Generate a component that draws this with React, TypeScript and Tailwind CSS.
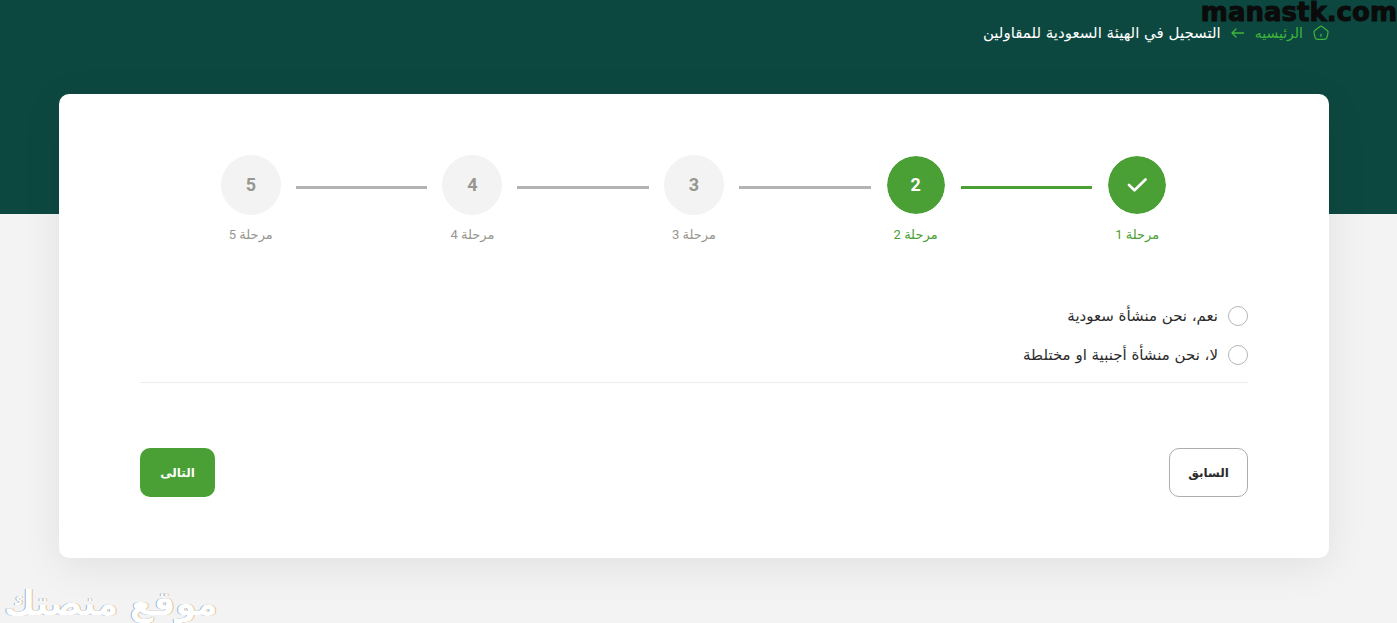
import { clsx } from 'clsx';

type StepState = 'done' | 'current' | 'upcoming';

const steps: { number: number; state: StepState }[] = [
    { number: 1, state: 'done' },
    { number: 2, state: 'current' },
    { number: 3, state: 'upcoming' },
    { number: 4, state: 'upcoming' },
    { number: 5, state: 'upcoming' },
];

const options = [
    { value: 'saudi', label: 'نعم، نحن منشأة سعودية' },
    { value: 'foreign', label: 'لا، نحن منشأة أجنبية او مختلطة' },
];

function HomeIcon() {
    return (
        <svg viewBox="0 0 16 16" className="size-4" fill="none" stroke="currentColor" strokeWidth="1.2" strokeLinecap="round" strokeLinejoin="round">
            <path d="M7 1.500 1.800 5.400c-.8.6-1 1.400-.8 2.300l1 4.700c.3 1.200 1.200 1.900 2.400 1.900h7.200c1.200 0 2.100-.7 2.400-1.900l1-4.700c.2-.9 0-1.700-.8-2.300L9 1.500c-.6-.4-1.400-.4-2 0Z" />
            <path d="M8 11.300v-2" />
        </svg>
    );
}

function ArrowIcon() {
    return (
        <svg viewBox="0 0 14 12" className="h-3 w-[14px]" fill="none" stroke="currentColor" strokeWidth="1.3" strokeLinecap="round" strokeLinejoin="round">
            <path d="M12.500 6H1M5 2 1 6l4 4" />
        </svg>
    );
}

function CheckIcon() {
    return (
        <svg viewBox="0 0 20 14" className="h-[14px] w-5" fill="none" stroke="currentColor" strokeWidth="2.6" strokeLinecap="round" strokeLinejoin="round">
            <path d="m2 7 5.500 5.300L18.500 1.500" />
        </svg>
    );
}

function Connector({ active, hidden }: { active: boolean; hidden: boolean }) {
    return <span className={clsx('mt-1 h-[3px] flex-1', hidden ? 'bg-transparent' : active ? 'bg-[#4aa034]' : 'bg-[#b3b3b3]')} />;
}

function Step({ number, state }: { number: number; state: StepState }) {
    const reached = state !== 'upcoming';

    return (
        <li className="font-[Roboto,'DejaVu_Sans',sans-serif]">
            <div className="flex items-center">
                <Connector active={reached} hidden={number === 1} />
                <span
                    className={clsx(
                        'mx-[15px] flex size-[60px] items-center justify-center rounded-full border text-lg font-bold',
                        reached ? 'border-white bg-[#4aa034] bg-clip-padding text-white' : 'border-[#f3f3f3] bg-[#f3f3f3] text-[#979790]',
                    )}
                >
                    {state === 'done' ? <CheckIcon /> : number}
                </span>
                <Connector active={state === 'done'} hidden={number === steps.length} />
            </div>
            <p className={clsx('mt-2 text-center text-[13px] leading-6', reached ? 'text-[#4aa034]' : 'text-[#979790]')}>مرحلة {number}</p>
        </li>
    );
}

export default function App() {
    return (
        <div dir="rtl" className="relative min-h-screen overflow-hidden bg-[#f3f3f3] font-['DejaVu_Sans',sans-serif] text-[#2c2c2c]">
            <header className="h-[214px] bg-[#0d4840] pt-[21px] pr-[68px] pl-[59px]">
                <nav className="flex h-6 items-center gap-2.5">
                    <a href="#" className="flex items-center gap-2.5 text-sm text-[#3fb43c]">
                        <HomeIcon />
                        الرئيسيه
                    </a>
                    <span className="text-[#3fb43c]">
                        <ArrowIcon />
                    </span>
                    <span className="text-[15px] text-white">التسجيل في الهيئة السعودية للمقاولين</span>
                </nav>
            </header>

            <main className="mt-[-120px] mr-[68px] mb-[65px] ml-[59px] rounded-[10px] bg-white px-[81px] pt-[61px] pb-[61px] shadow-[0_8px_40px_rgba(0,0,0,0.08)]">
                <ol className="grid grid-cols-5">
                    {steps.map((step) => (
                        <Step key={step.number} {...step} />
                    ))}
                </ol>

                <form>
                    <fieldset aria-label="نوع المنشأة" className="mt-[57px] flex flex-col gap-[15px] border-b border-[#ececec] pb-[15px]">
                        {options.map((option) => (
                            <label key={option.value} className="flex h-6 items-center gap-2.5 self-start text-[15px]">
                                <input type="radio" name="entity" value={option.value} className="size-5 shrink-0 appearance-none rounded-full border border-[#b5b5b5] bg-white checked:border-[6px] checked:border-[#4aa034]" />
                                {option.label}
                            </label>
                        ))}
                    </fieldset>

                    <div className="mt-[65px] flex justify-between text-xs font-bold">
                        <button type="button" className="h-[49px] w-[79px] rounded-[10px] border border-[#adadad] bg-white">
                            السابق
                        </button>
                        <button type="submit" className="h-[49px] w-[75px] rounded-[10px] bg-[#4aa034] text-white">
                            التالى
                        </button>
                    </div>
                </form>
            </main>

            <p dir="ltr" className="absolute top-0 right-0 text-[26px] leading-6 font-bold text-[#0b0b0b] [-webkit-text-stroke:1px_#0b0b0b]">
                manastk.com
            </p>
            <p className="absolute bottom-0 left-1 text-[34px] leading-10 font-bold text-white [text-shadow:-1px_0_0_#8fb4d6,1px_0_0_#e3c08c]">موقع منصتك</p>
        </div>
    );
}
